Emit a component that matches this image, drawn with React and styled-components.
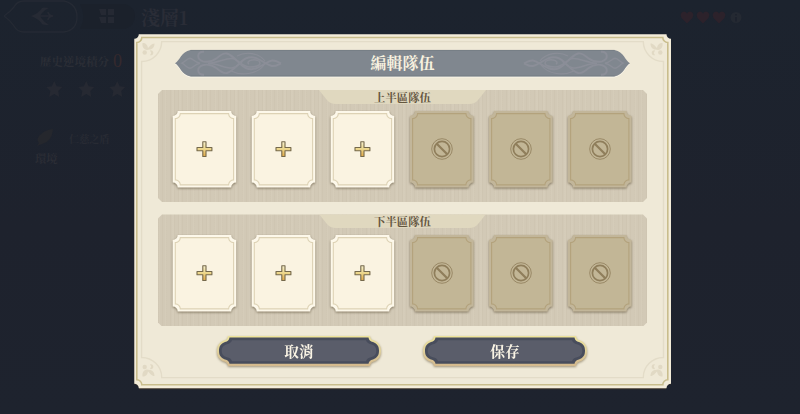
import React from "react"
import styled, { createGlobalStyle } from "styled-components"

const GlobalStyle = createGlobalStyle`
  * {
    box-sizing: border-box;
  }
  body {
    margin: 0;
    overflow: hidden;
    font-family: "Noto Serif CJK TC", "Noto Sans CJK TC", serif;
    font-weight: 700;
  }
`

const Screen = styled.div`
  position: relative;
  width: 800px;
  height: 414px;
  overflow: hidden;
  background: linear-gradient(to bottom, #1c232e, #1e222d 55%, #1e232e);
`

const TopBar = styled.header`
  display: flex;
  align-items: center;
  height: 34px;
  padding-left: 4px;
`

const StageName = styled.div`
  width: 544px;
  padding-left: 4px;
  font-size: 19px;
  line-height: 32px;
  color: #2a2d37;
`

const Score = styled.div`
  display: flex;
  align-items: center;
  height: 26px;
  margin-top: 14px;
  padding-left: 40px;
  font-size: 11.5px;
  color: #2b2e36;
`

const ScoreValue = styled.span`
  margin-left: 4px;
  font-family: "Liberation Serif", serif;
  font-size: 18px;
  font-weight: 400;
  color: #35292d;
`

const Stars = styled.div`
  display: flex;
  gap: 15px;
  margin-top: 7px;
  padding-left: 46px;
`

const Buff = styled.div`
  display: flex;
  align-items: center;
  gap: 12px;
  height: 24px;
  margin-top: 29px;
  padding-left: 34px;
  font-size: 10.2px;
  color: #282b34;
`

const BuffLabel = styled.div`
  padding-left: 35px;
  font-size: 11.3px;
  line-height: 16px;
  color: #2b2d35;
`

const Overlay = styled.div`
  position: absolute;
  inset: 0;
  padding: 34px 0 0 134px;
`

const Dialog = styled.section`
  position: relative;
  display: flex;
  flex-direction: column;
  align-items: center;
  width: 537px;
  height: 355px;
  padding-top: 16px;
`

const Frame = styled.svg`
  position: absolute;
  top: 0;
  left: 0;
  overflow: visible;
`

const Backdrop = styled.svg`
  position: absolute;
  inset: 0;
  overflow: visible;
`

const Banner = styled.h1`
  position: relative;
  width: 455px;
  height: 27px;
  margin: 0;
  font-size: 16px;
  line-height: 26px;
  text-align: center;
  color: #f7f1df;
`

const Label = styled.span`
  position: relative;
`

const Team = styled.section`
  position: relative;
  width: 489px;
  height: 112px;
  margin-top: ${(props) => props.$gap}px;
  clip-path: polygon(
    4px 0, calc(100% - 4px) 0, 100% 4px, 100% calc(100% - 4px),
    calc(100% - 4px) 100%, 4px 100%, 0 calc(100% - 4px), 0 4px
  );
  background:
    repeating-linear-gradient(to right, rgba(150, 135, 105, 0.05) 0 1px, transparent 1px 4px),
    repeating-linear-gradient(to right, rgba(255, 248, 230, 0.06) 0 2px, transparent 2px 7px),
    #d2c9b6;
`

const TeamTab = styled.h2`
  position: relative;
  width: 167px;
  height: 14px;
  margin: 0 auto;
  font-size: 11.4px;
  line-height: 14px;
  text-align: center;
  color: #64563f;
`

const Slots = styled.div`
  display: grid;
  grid-template-columns: repeat(6, 64px);
  column-gap: 15px;
  padding: 7px 0 0 15px;
`

const Slot = styled.button`
  display: block;
  width: 64px;
  height: 77px;
  padding: 0;
  border: 0;
  background: none;
  filter: drop-shadow(0 1.2px 1px rgba(92, 80, 56, 0.65));

  svg {
    display: block;
    overflow: visible;
  }
`

const Actions = styled.div`
  display: flex;
  gap: 42px;
  margin-top: 9.6px;
  padding-right: 1px;
`

const ActionButton = styled.button`
  position: relative;
  width: 164px;
  height: 30px;
  padding: 0;
  border: 0;
  background: none;
  font: inherit;
  font-size: 14.8px;
  line-height: 29px;
  color: #faf4e5;
  filter: drop-shadow(0 1px 1px rgba(110, 95, 65, 0.6));
`

// rectangle whose four corners are bitten in by a quarter circle
const notched = (x, y, w, h, r) =>
  `M${x + r} ${y}H${x + w - r}A${r} ${r} 0 0 0 ${x + w} ${y + r}V${y + h - r}` +
  `A${r} ${r} 0 0 0 ${x + w - r} ${y + h}H${x + r}A${r} ${r} 0 0 0 ${x} ${y + h - r}` +
  `V${y + r}A${r} ${r} 0 0 0 ${x + r} ${y}Z`

function CornerFlower({ transform }) {
  return (
    <g transform={transform} fill="#e1d9c4">
      <path d="M8.5 9C12 9 13.5 11 14 14C16 12 17.5 9.5 20.5 9.5C20.5 13 18.5 15.5 15.5 15.5L13 16C9.5 15.5 8 13 8.5 9Z" />
      <circle cx="10.7" cy="18.5" r="2.2" />
      <path d="M16 16.5A2.5 2.5 0 1 1 16 21.2L17.2 19Z" />
    </g>
  )
}

function DialogFrame() {
  return (
    <Frame width="537" height="355" viewBox="0 0 537 355">
      <path d={notched(0.2, 1.2, 536.8, 354, 5)} fill="#40372e" />
      <path d={notched(0.3, 0.3, 536.7, 353.9, 4.5)} fill="#f3ecd9" />
      <path d={notched(2.8, 3.5, 531, 347.3, 5)} fill="#efe9d7" stroke="#c9bd8c" strokeWidth="1.6" />
      <path
        d="M27.7 7.6H509.3A20 20 0 0 0 529.5 27.5V323.5A20 20 0 0 0 509.3 343.6H27.7A20 20 0 0 0 7.6 323.5V27.5A20 20 0 0 0 27.7 7.6Z"
        fill="none"
        stroke="#e3dcc8"
        strokeWidth="1.4"
      />
      <CornerFlower />
      <CornerFlower transform="translate(537 0) scale(-1 1)" />
      <CornerFlower transform="translate(0 351.5) scale(1 -1)" />
      <CornerFlower transform="translate(537 351.5) scale(-1 -1)" />
    </Frame>
  )
}

function Knot({ transform }) {
  return (
    <g transform={transform} fill="none" stroke="#8f919b" strokeWidth="1.5" opacity="0.75">
      <path d="M7 13.2C11 11 12 8.5 15 8.3C18 8.5 19 12 25 13.2C19 14.5 18 18.2 15 18.2C12 18 11 15.5 7 13.2Z" />
      <path d="M29 1.8C22 1.5 21 9 28 11.3C33 12.6 38 11 42 8C46 4.5 49 2.6 52 3.5C57 5 61 10 66 14.5C71 19.5 77 20 82 18C89 15 92 11.5 97 10.5C101 10 103 12 106 13.3" strokeWidth="1.9" />
      <path d="M29 24.8C22 25 21 17.5 28 15.1C33 13.9 38 15.5 42 18.5C46 22 49 23.8 52 23C57 21.5 61 16.5 66 12C71 7 77 6.5 82 8.5C89 11.5 92 15 97 16C101 16.5 103 14.6 106 13.3" strokeWidth="1.9" />
      <path d="M33 13.2C43 13 50 8 57 8.5C64 9 66 17 75 17C82 17 85 15 85 13.2C85 10.5 81 9.5 77 10C73 10.5 72 13 74 14" />
      <path d="M33 13.2C43 13.5 50 18.5 57 18C62 17.5 64 14 67 12" />
      <path d="M56 21C66 26 82 24.5 89 15M62 6C71 1 84 3 90 11" strokeWidth="1.1" />
    </g>
  )
}

function Title({ children }) {
  const shape =
    "M0 13.3C5 10.5 6 2 15.5 0H439.5C449 2 450 10.5 455 13.3C450 16 449 24.6 439.5 26.6H15.5C6 24.6 5 16 0 13.3Z"
  return (
    <Banner>
      <Backdrop width="455" height="27" viewBox="0 0 455 27">
        <path d={shape} fill="#faf6e9" transform="translate(0 .9)" />
        <path d={shape} fill="#80878f" />
        <path d="M15.5 .4H439.5M15.5 25.8H439.5" stroke="#747c84" strokeWidth=".8" />
        <Knot />
        <Knot transform="translate(455 0) scale(-1 1)" />
      </Backdrop>
      <Label>{children}</Label>
    </Banner>
  )
}

function EmptySlot() {
  return (
    <Slot aria-label="+">
      <svg width="64" height="77" viewBox="0.3 0 64 77">
        <defs>
          <linearGradient id="gold" x1="0" y1="0" x2="0" y2="1">
            <stop offset="0" stopColor="#f7f1cf" />
            <stop offset=".5" stopColor="#ecd68a" />
            <stop offset="1" stopColor="#e2a845" />
          </linearGradient>
        </defs>
        <path d={notched(0, 0, 63.5, 76.5, 5)} fill="#fdf8ea" />
        <path d={notched(2.6, 2.6, 58.3, 71.3, 5)} fill="#faf3e1" stroke="#ddd2b5" strokeWidth="1.1" />
        <path
          d="M30.1 30.7H33.3V36.5H39.2V39.7H33.3V45.5H30.1V39.7H24.3V36.5H30.1Z"
          fill="url(#gold)"
          stroke="#75694c"
          strokeWidth="1.1"
          strokeLinejoin="round"
        />
      </svg>
    </Slot>
  )
}

function LockedSlot() {
  return (
    <Slot disabled>
      <svg width="64" height="77" viewBox="0 0 64 77">
        <path d={notched(0, 0, 63.5, 76.5, 5)} fill="#c2b69a" />
        <path d={notched(2.6, 2.6, 58.3, 71.3, 5)} fill="#c2b696" stroke="#b3a27c" strokeWidth="1.1" />
        <g fill="none" stroke="#8f7e5b">
          <circle cx="32" cy="38" r="10.3" strokeWidth=".8" />
          <circle cx="32" cy="38" r="7.6" strokeWidth="1.7" />
          <path d="M26.5 32.5L37.5 43.5" strokeWidth="2.2" />
        </g>
      </svg>
    </Slot>
  )
}

function TeamPanel({ name, gap }) {
  return (
    <Team $gap={gap}>
      <TeamTab>
        <Backdrop width="167" height="14" viewBox="0 0 167 14">
          <path d="M0 0H167L159 10Q156 14 150 14H17Q11 14 8 10Z" fill="#e0d8bf" />
        </Backdrop>
        <Label>{name}</Label>
      </TeamTab>
      <Slots>
        {[0, 1, 2].map((i) => (
          <EmptySlot key={i} />
        ))}
        {[3, 4, 5].map((i) => (
          <LockedSlot key={i} />
        ))}
      </Slots>
    </Team>
  )
}

function Action({ children }) {
  return (
    <ActionButton>
      <Backdrop width="164" height="30" viewBox="0 0 164 30">
        <defs>
          <linearGradient id="rim" x1="0" y1="0" x2="0" y2="1">
            <stop offset="0" stopColor="#eee49b" />
            <stop offset=".5" stopColor="#dfd09b" />
            <stop offset="1" stopColor="#d4b98d" />
          </linearGradient>
        </defs>
        <path
          d="M11 0H153Q153.3 4 157 4.5C162 6.5 164 10 164 15S162 23.5 157 25.5Q153.3 26 153 30H11Q10.7 26 7 25.5C2 23.5 0 20 0 15S2 6.5 7 4.5Q10.7 4 11 0Z"
          fill="url(#rim)"
        />
        <path
          d="M12.5 1.5H151.5Q152 5.4 156 6C160.5 7.7 162 10.5 162 14.8S160.5 21.8 156 23.4Q152 24 151.5 27.8H12.5Q12 24 8 23.4C3.5 21.8 2 19 2 14.8S3.5 7.7 8 6Q12 5.4 12.5 1.5Z"
          fill="#484d5c"
        />
        <path
          d="M15 4.3H149Q150 7.5 154 8.2C158 9.5 159.3 11.5 159.3 14.8S158 20 154 21.3Q150 22 149 25.2H15Q14 22 10 21.3C6 20 4.7 18 4.7 14.8S6 9.5 10 8.2Q14 7.5 15 4.3Z"
          fill="#5a5d6a"
        />
      </Backdrop>
      <Label>{children}</Label>
    </ActionButton>
  )
}

function StageScreen() {
  return (
    <>
      <TopBar>
        <svg width="133" height="34" viewBox="4 0 133 34" fill="none">
          <path d="M4 16Q10 12 14 7Q17 1 24 1H64Q77 4 77 17T64 32H24Q17 32 14 26Q10 20 4 16Z" stroke="#252a34" strokeWidth="1.3" />
          <path d="M80 4H125Q135 7 135 16T125 29H80Q87 17 80 4Z" fill="#1b212b" />
          <path d="M31 16Q39 13 42 8Q43 7 49 8Q44 10 42 13L40 16L42 19Q44 22 49 25Q43 25 42 24Q39 19 31 16Z" fill="#262a34" />
          <path d="M40 16H53M48 12Q48 15 53 16Q48 17 48 20" stroke="#262a34" strokeWidth="1.5" />
          <path d="M99 9H106V15H101ZM108 9H114V15H108ZM99 17H106V23H101ZM108 17H114V23H108Z" fill="#252933" />
        </svg>
        <StageName>淺層1</StageName>
        <svg width="72" height="16" viewBox="0 0 72 16" overflow="visible">
          {[0, 16, 32].map((x) => (
            <path
              key={x}
              transform={`translate(${x} .5)`}
              d="M6 14L.5 8.5Q-2 3 3 2Q5 2 6 4Q7 2 9 2Q14 3 11.5 8.5Z"
              fill="#2c222b"
            />
          ))}
          <circle cx="55" cy="8.5" r="5.5" fill="#242932" />
          <path d="M55 5V6.5M55 8V12.5" stroke="#1d222d" strokeWidth="2" />
        </svg>
      </TopBar>
      <Score>
        歷史逆境積分<ScoreValue>0</ScoreValue>
      </Score>
      <Stars>
        {[0, 1, 2].map((i) => (
          <svg key={i} width="16.5" height="16" viewBox="0 0 16 16">
            <path d="M8 0L10.4 5.2L16 6L12 10L13 16L8 13L3 16L4 10L0 6L5.6 5.2Z" fill="#262932" />
          </svg>
        ))}
      </Stars>
      <Buff>
        <svg width="23" height="20" viewBox="0 0 23 20">
          <path d="M19 1Q10 2 5 8Q2 12 5 15L3 18L8 16Q18 14 19 1Z" fill="#25272d" />
        </svg>
        仁慈之盾
      </Buff>
      <BuffLabel>環境</BuffLabel>
    </>
  )
}

function App() {
  return (
    <Screen>
      <GlobalStyle />
      <StageScreen />
      <Overlay>
        <Dialog>
          <DialogFrame />
          <Title>編輯隊伍</Title>
          <TeamPanel name="上半區隊伍" gap={13} />
          <TeamPanel name="下半區隊伍" gap={12.4} />
          <Actions>
            <Action>取消</Action>
            <Action>保存</Action>
          </Actions>
        </Dialog>
      </Overlay>
    </Screen>
  )
}

export default App
